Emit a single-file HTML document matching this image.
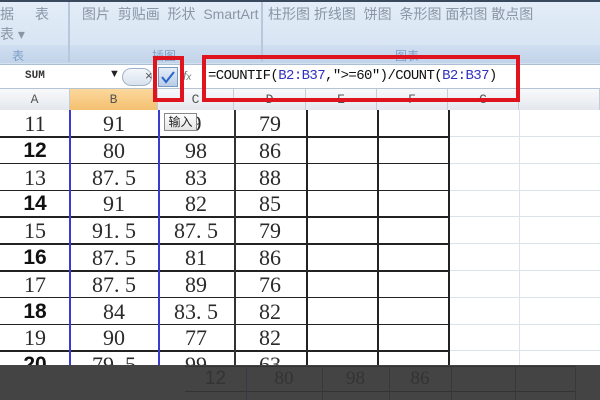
<!DOCTYPE html>
<html><head><meta charset="utf-8"><style>
*{margin:0;padding:0;box-sizing:border-box}
body{width:600px;height:400px;overflow:hidden;position:relative;background:#fff;font-family:"Liberation Sans","Noto Sans CJK SC",sans-serif}
.a{position:absolute}
.rib{left:0;top:0;width:600px;height:64px;background:linear-gradient(#e4edf8,#d3e1f1)}
.rt{color:#8a96a6;font-size:14px;white-space:nowrap}
.gl{color:#7f9fc8;font-size:12px}
.cell{position:absolute;text-align:center;font-family:"Liberation Serif","Noto Serif CJK SC",serif;font-size:22px;color:#2a2a2a;line-height:27px}
.hd{position:absolute;top:89px;height:21px;text-align:center;font-family:"Liberation Mono",monospace;font-size:13px;color:#555;line-height:21px;background:linear-gradient(#f8f9fb,#e4e8ee);border-right:1px solid #c5ccd6}
.bold{font-family:"Liberation Sans",sans-serif;font-weight:bold;font-size:21px;color:#111}
</style></head><body>
<div class="a rib"></div>
<div class="a" style="left:0;top:0;width:600px;height:2px;background:#3a4a5e"></div>
<div class="a" style="left:0;top:45px;width:600px;height:18px;background:linear-gradient(#d0def0,#c2d4ea)"></div>
<div class="a" style="left:68px;top:2px;width:2px;height:60px;background:#b8c8dc"></div>
<div class="a" style="left:261px;top:2px;width:2px;height:60px;background:#b8c8dc"></div>
<div class="a rt" style="left:0;top:4px">据</div>
<div class="a rt" style="left:35px;top:4px">表</div>
<div class="a rt" style="left:0;top:24px">表 ▾</div>
<div class="a rt" style="left:82px;top:4px">图片&nbsp;&nbsp;剪贴画&nbsp;&nbsp;形状&nbsp;&nbsp;SmartArt</div>
<div class="a rt" style="left:268px;top:4px">柱形图 折线图&nbsp;&nbsp;饼图&nbsp;&nbsp;条形图 面积图 散点图</div>
<div class="a gl" style="left:12px;top:47px">表</div>
<div class="a gl" style="left:152px;top:47px">插图</div>
<div class="a gl" style="left:395px;top:47px">图表</div>
<!-- formula bar -->
<div class="a" style="left:0;top:64px;width:600px;height:25px;background:#fff;border-top:1px solid #aebfd4;border-bottom:1px solid #b5c3d3"></div>
<div class="a" style="left:25px;top:70px;font-family:'Liberation Mono',monospace;font-size:11px;font-weight:bold;color:#333">SUM</div>
<div class="a" style="left:109px;top:68px;font-size:11px;color:#222">▼</div>
<div class="a" style="left:122px;top:68px;width:30px;height:18px;border:1px solid #9fb2c8;border-radius:9px;background:linear-gradient(#f4f7fb,#d8e2ee)"></div>
<div class="a" style="left:145px;top:68px;font-size:13px;color:#555">×</div>
<div class="a" style="left:158px;top:67px;width:20px;height:20px;background:linear-gradient(#e7eff9,#b8cce6);border:1px solid #7b9ac0"></div>
<svg class="a" style="left:160px;top:69px" width="16" height="16"><path d="M2 8 L6 13 L14 3" stroke="#2a63c8" stroke-width="2" fill="none"/></svg>
<div class="a" style="left:183px;top:69px;font-size:12px;color:#777;font-style:italic">f<small>x</small></div>
<div class="a" style="left:208px;top:68px;font-family:'Liberation Mono','Noto Sans CJK SC',monospace;font-size:14px;color:#111;white-space:nowrap;letter-spacing:-0.6px">=COUNTIF(<span style="color:#3030c0">B2:B37</span>,"&gt;=60")/COUNT(<span style="color:#3030c0">B2:B37</span>)</div>
<!-- headers -->
<div class="hd" style="left:0;width:70px">A</div>
<div class="hd" style="left:70px;width:88px;background:linear-gradient(#fbd89b,#f4c070)">B</div>
<div class="hd" style="left:158px;width:76px">C</div>
<div class="hd" style="left:234px;width:72px">D</div>
<div class="hd" style="left:306px;width:71px">E</div>
<div class="hd" style="left:377px;width:71px">F</div>
<div class="hd" style="left:448px;width:71px">G</div>
<div class="hd" style="left:519px;width:81px"></div>
<div id="g"></div>
<script>
var rows=[["11","91","9","79"],["12","80","98","86"],["13","87.5","83","88"],["14","91","82","85"],["15","91.5","87.5","79"],["16","87.5","81","86"],["17","87.5","89","76"],["18","84","83.5","82"],["19","90","77","82"],["20","79.5","99","63"]];
var xs=[0,70,158,234,306];var ws=[70,88,76,72];var h="";
for(var i=0;i<rows.length;i++){var t=110+i*26.8;
for(var j=0;j<4;j++){h+='<div class="cell'+(j==0&&i%2==1?' bold':'')+'" style="left:'+xs[j]+'px;top:'+t+'px;width:'+ws[j]+'px">'+rows[i][j].replace('.','. ')+'</div>';}
h+='<div class="a" style="left:0;top:'+(t+26)+'px;width:448px;height:1.5px;background:#222"></div>';
h+='<div class="a" style="left:448px;top:'+(t+26)+'px;width:152px;height:1px;background:#dde3ea"></div>';}
[[158,'#3b3bd0'],[234,'#333'],[306,'#222'],[377,'#222'],[448,'#222']].forEach(function(c){h+='<div class="a" style="left:'+c[0]+'px;top:110px;width:1.5px;height:260px;background:'+c[1]+'"></div>';});
h+='<div class="a" style="left:69px;top:110px;width:1.5px;height:260px;background:#3b3bd0"></div>';
h+='<div class="a" style="left:519px;top:110px;width:1px;height:260px;background:#dde3ea"></div>';
document.getElementById('g').innerHTML=h;
</script>
<div class="a" style="left:164px;top:113px;width:33px;height:18px;border:1px solid #888;background:linear-gradient(#fff,#e4e4e4);font-size:12px;line-height:16px;text-align:center;color:#222">输入</div>
<div class="a" style="left:153px;top:56px;width:31px;height:46px;border:4px solid #e0141e"></div>
<div class="a" style="left:202px;top:55px;width:318px;height:47px;border:4px solid #e0141e"></div>
<div class="a" style="left:0;top:365px;width:600px;height:35px;background:#444"></div>
<div class="a" style="left:185px;top:366px;width:390px;height:1px;background:#333"></div>
<div class="a" style="left:185px;top:391px;width:390px;height:1px;background:#333"></div>
<div class="a" style="left:246px;top:366px;width:1px;height:34px;background:#383848"></div>
<div class="a" style="left:322px;top:366px;width:1px;height:34px;background:#383838"></div>
<div class="a" style="left:389px;top:366px;width:1px;height:34px;background:#383838"></div>
<div class="a" style="left:451px;top:366px;width:1px;height:34px;background:#383838"></div>
<div class="a" style="left:515px;top:366px;width:1px;height:34px;background:#383838"></div>
<div class="a" style="left:575px;top:366px;width:1px;height:34px;background:#383838"></div>
<div class="a" style="left:185px;top:367px;width:61px;text-align:center;font-size:19px;color:#333;line-height:24px">12</div>
<div class="a" style="left:246px;top:367px;width:76px;text-align:center;font-size:19px;color:#333;line-height:24px;font-family:'Liberation Serif',serif">80</div>
<div class="a" style="left:322px;top:367px;width:67px;text-align:center;font-size:19px;color:#333;line-height:24px;font-family:'Liberation Serif',serif">98</div>
<div class="a" style="left:389px;top:367px;width:62px;text-align:center;font-size:19px;color:#333;line-height:24px;font-family:'Liberation Serif',serif">86</div>
</body></html>
